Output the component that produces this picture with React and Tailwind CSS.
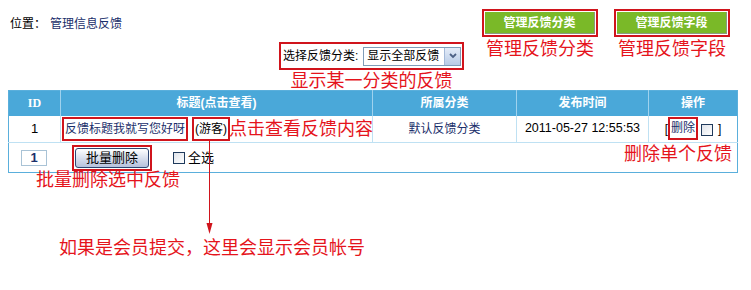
const Check = () => (
  <span className="inline-block w-[12px] h-[12px] border border-[#1f3a5c] bg-gradient-to-br from-[#dfe3ea] to-white align-middle" />
);

const Note = ({ children, className = '' }) => (
  <span className={`text-[18px] leading-[20px] text-[#e5141c] whitespace-nowrap ${className}`}>{children}</span>
);

const GreenButton = ({ label, note }) => (
  <div className="flex flex-col items-center">
    <div className="w-[116px] h-[28px] border-2 border-[#d0141c] p-px bg-white">
      <button className="w-full h-full bg-[#7ab928] border-r border-b border-[#8a9a80] text-white font-bold text-[12px] leading-[20px]">
        {label}
      </button>
    </div>
    <Note className="mt-[2px]">{note}</Note>
  </div>
);

export default function App() {
  return (
    <div className="relative w-[751px] h-[290px] bg-white text-[12px] text-black font-['Liberation_Sans','Noto_Sans_CJK_SC',sans-serif]">
      <div className="flex h-[90px]">
        <div className="pl-[10px] pt-[16px] leading-[16px]">
          位置：<a href="#" className="ml-[4px] text-[#1b2f6b]">管理信息反馈</a>
        </div>
        <div className="ml-auto mr-[21px] flex items-start">
          <div className="mt-[42px] flex flex-col items-center">
            <div className="w-[185px] h-[28px] border-2 border-[#d0141c] flex items-center pl-[2px]">
              <span>选择反馈分类:</span>
              <div className="ml-[5px] w-[98px] h-[19px] border border-[#7f9db9] flex items-center bg-white">
                <span className="flex-1 pl-[3px] leading-[17px]">显示全部反馈</span>
                <span className="w-[16px] h-[17px] bg-gradient-to-b from-[#e4ecf8] to-[#b8cbe6] border-l border-[#a4b9d8] flex items-center justify-center">
                  <svg width="8" height="6" viewBox="0 0 8 6">
                    <path d="M1 1 L4 4 L7 1" fill="none" stroke="#4d6185" strokeWidth="1.8" />
                  </svg>
                </span>
              </div>
            </div>
            <Note className="mt-[1px]">显示某一分类的反馈</Note>
          </div>
          <div className="ml-[18px] mt-[9px]">
            <GreenButton label="管理反馈分类" note="管理反馈分类" />
          </div>
          <div className="ml-[16px] mt-[9px]">
            <GreenButton label="管理反馈字段" note="管理反馈字段" />
          </div>
        </div>
      </div>

      <table className="ml-[8px] w-[729px] table-fixed border-collapse border border-[#5aafdc]">
        <colgroup>
          <col className="w-[52px]" />
          <col className="w-[312px]" />
          <col className="w-[144px]" />
          <col className="w-[132px]" />
          <col className="w-[89px]" />
        </colgroup>
        <thead>
          <tr className="h-[25px] bg-[#4aa8d9] text-white font-bold">
            <th className="border-r border-[#9fd2ee] font-['Liberation_Serif',serif]">ID</th>
            <th className="border-r border-[#9fd2ee]">标题(点击查看)</th>
            <th className="border-r border-[#9fd2ee]">所属分类</th>
            <th className="border-r border-[#9fd2ee]">发布时间</th>
            <th>操作</th>
          </tr>
        </thead>
        <tbody>
          <tr className="h-[27px] border-b border-[#bfe1f3]">
            <td className="text-center border-r border-[#bfe1f3] text-[13px]">1</td>
            <td className="border-r border-[#bfe1f3] pl-px whitespace-nowrap">
              <span className="inline-block border-2 border-[#d0141c] px-[1px] leading-[20px] text-[#1b2f6b]">反馈标题我就写您好呀</span>
              <span className="relative ml-[4px] inline-block border-2 border-[#d0141c] px-[1px] leading-[20px]">
                (游客)
                <Note className="absolute left-full top-[0px] ml-[1px]">点击查看反馈内容</Note>
              </span>
            </td>
            <td className="text-center border-r border-[#bfe1f3] text-[#1b2f6b]">默认反馈分类</td>
            <td className="text-center border-r border-[#bfe1f3] text-[12.5px]">2011-05-27 12:55:53</td>
            <td className="text-center whitespace-nowrap">
              <span className="inline-flex items-center">
                [<span className="border-2 border-[#d0141c] px-px leading-[19px] text-[#1b2f6b]">删除</span>
                <span className="ml-[3px]"><Check /></span>
                <span className="ml-[5px]">]</span>
              </span>
            </td>
          </tr>
          <tr className="h-[30px]">
            <td colSpan={5}>
              <div className="flex items-center">
                <span className="ml-[12px] w-[26px] h-[16px] border border-[#a9c3d6] flex items-center justify-center text-[13px] font-bold text-[#1b2f6b]">1</span>
                <span className="ml-[25px] w-[80px] h-[26px] border-2 border-[#d0141c] p-px">
                  <button className="w-full h-full rounded-[3px] border border-[#2c4672] bg-gradient-to-b from-white to-[#b5c1dc] text-[13px] leading-[18px]">
                    批量删除
                  </button>
                </span>
                <span className="ml-[21px]"><Check /></span>
                <span className="ml-[3px] text-[13px]">全选</span>
              </div>
            </td>
          </tr>
        </tbody>
      </table>

      <Note className="absolute left-[36px] top-[170px]">批量删除选中反馈</Note>
      <Note className="absolute left-[624px] top-[144px]">删除单个反馈</Note>

      <svg className="absolute left-[205px] top-[141px]" width="9" height="94" viewBox="0 0 9 94">
        <line x1="4.5" y1="0" x2="4.5" y2="84" stroke="#d0141c" strokeWidth="1" />
        <polygon points="1.5,82 7.5,82 4.5,93" fill="#d0141c" />
      </svg>

      <div className="ml-[59px] mt-[65px]">
        <Note>如果是会员提交，这里会显示会员帐号</Note>
      </div>
    </div>
  );
}
